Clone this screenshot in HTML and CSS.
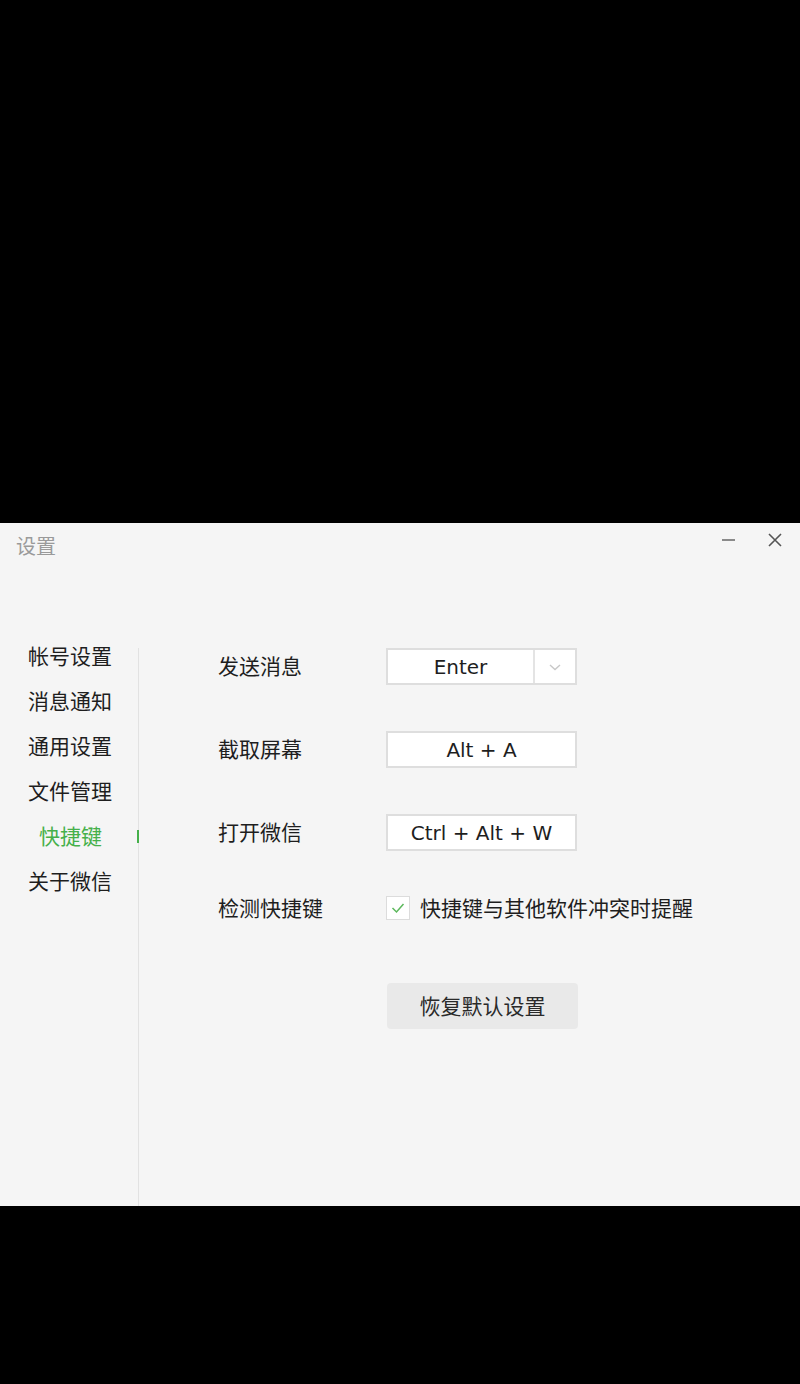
FILE: index.html
```html
<!DOCTYPE html>
<html lang="zh-CN">
<head>
<meta charset="utf-8">
<title>设置</title>
<link rel="stylesheet" href="styles.css">
</head>
<body>
<div class="top-space"></div>
<div class="window">
  <div class="titlebar">
    <span class="title">设置</span>
    <div class="controls">
      <svg class="ctl" width="16" height="16" viewBox="0 0 16 16"><line x1="2" y1="8" x2="15" y2="8" stroke="#666" stroke-width="1.5"/></svg>
      <svg class="ctl" width="16" height="16" viewBox="0 0 16 16"><path d="M2 2 L14 14 M14 2 L2 14" stroke="#555" stroke-width="1.6"/></svg>
    </div>
  </div>
  <div class="main">
    <nav class="sidebar">
      <div class="nav-item">帐号设置</div>
      <div class="nav-item">消息通知</div>
      <div class="nav-item">通用设置</div>
      <div class="nav-item">文件管理</div>
      <div class="nav-item active">快捷键</div>
      <div class="nav-item">关于微信</div>
    </nav>
    <section class="content">
      <div class="row">
        <div class="label">发送消息</div>
        <div class="field select">
          <span class="value">Enter</span>
          <span class="arrow"><svg width="14" height="10" viewBox="0 0 14 10"><path d="M2 3 L7 7.5 L12 3" fill="none" stroke="#c8c8c8" stroke-width="1.4"/></svg></span>
        </div>
      </div>
      <div class="row">
        <div class="label">截取屏幕</div>
        <div class="field"><span class="value">Alt + A</span></div>
      </div>
      <div class="row">
        <div class="label">打开微信</div>
        <div class="field"><span class="value">Ctrl + Alt + W</span></div>
      </div>
      <div class="row check-row">
        <div class="label">检测快捷键</div>
        <div class="check">
          <span class="box"><svg width="18" height="18" viewBox="0 0 18 18"><path d="M3.5 9 L7.5 13 L14.5 5" fill="none" stroke="#5cb85c" stroke-width="1.5"/></svg></span>
          <span class="check-text">快捷键与其他软件冲突时提醒</span>
        </div>
      </div>
      <div class="btn-row">
        <button class="reset">恢复默认设置</button>
      </div>
    </section>
  </div>
</div>
</body>
</html>
```

FILE: styles.css
```css
html, body {
  margin: 0;
  padding: 0;
  background: #000;
}
body {
  width: 800px;
  height: 1384px;
  font-family: "Noto Sans", "Noto Sans CJK SC", sans-serif;
  color: #222;
}
.top-space {
  height: 523px;
}
.window {
  height: 683px;
  background: #f5f5f5;
  display: flex;
  flex-direction: column;
}
.titlebar {
  height: 125px;
  display: flex;
  align-items: flex-start;
  justify-content: space-between;
}
.title {
  margin: 9px 0 0 16px;
  font-size: 20px;
  line-height: 30px;
  color: #9a9a9a;
}
.controls {
  display: flex;
  gap: 31px;
  margin: 9px 17px 0 0;
}
.ctl {
  display: block;
}
.main {
  flex: 1;
  display: flex;
}
.sidebar {
  width: 139px;
  border-right: 1.5px solid #e2e2e2;
  display: flex;
  flex-direction: column;
  gap: 15px;
  box-sizing: border-box;
}
.nav-item {
  height: 30px;
  line-height: 30px;
  font-size: 21px;
  padding-left: 28px;
  color: #1e1e1e;
  position: relative;
}
.nav-item:first-child {
  margin-top: -7px;
}
.nav-item.active {
  color: #45b04a;
  padding-left: 39px;
}
.nav-item.active::after {
  content: "";
  position: absolute;
  right: -1px;
  top: 9px;
  width: 2px;
  height: 13px;
  background: #45b04a;
}
.content {
  flex: 1;
  padding: 0 0 0 79px;
  display: flex;
  flex-direction: column;
  gap: 46px;
}
.row {
  display: flex;
  align-items: center;
  height: 37px;
}
.label {
  width: 168px;
  font-size: 21px;
  color: #1e1e1e;
  margin-top: -3px;
}
.field {
  width: 191px;
  height: 37px;
  box-sizing: border-box;
  background: #fff;
  border: 2px solid #dedede;
  display: flex;
  align-items: center;
  justify-content: center;
  font-size: 20px;
  color: #1e1e1e;
  font-family: "DejaVu Sans", "Noto Sans", sans-serif;
}
.select {
  justify-content: flex-start;
}
.select .value {
  width: 145px;
  text-align: center;
}
.select .arrow {
  flex: 1;
  height: 100%;
  border-left: 2px solid #e4e4e4;
  display: flex;
  align-items: center;
  justify-content: center;
}
.check-row {
  height: 24px;
  margin-top: -1px;
}
.check {
  display: flex;
  align-items: center;
  gap: 10px;
}
.box {
  width: 24px;
  height: 24px;
  box-sizing: border-box;
  background: #fff;
  border: 1.5px solid #dcdcdc;
  display: flex;
  align-items: center;
  justify-content: center;
}
.check-text {
  font-size: 21px;
  color: #1e1e1e;
  margin-top: -3px;
}
.btn-row {
  padding-left: 169px;
  margin-top: 17px;
}
.reset {
  width: 191px;
  height: 46px;
  border: none;
  border-radius: 4px;
  background: #e9e9e9;
  font-family: "Noto Sans CJK SC", sans-serif;
  font-size: 21px;
  color: #2a2a2a;
  padding: 0 0 3px 0;
}
```
